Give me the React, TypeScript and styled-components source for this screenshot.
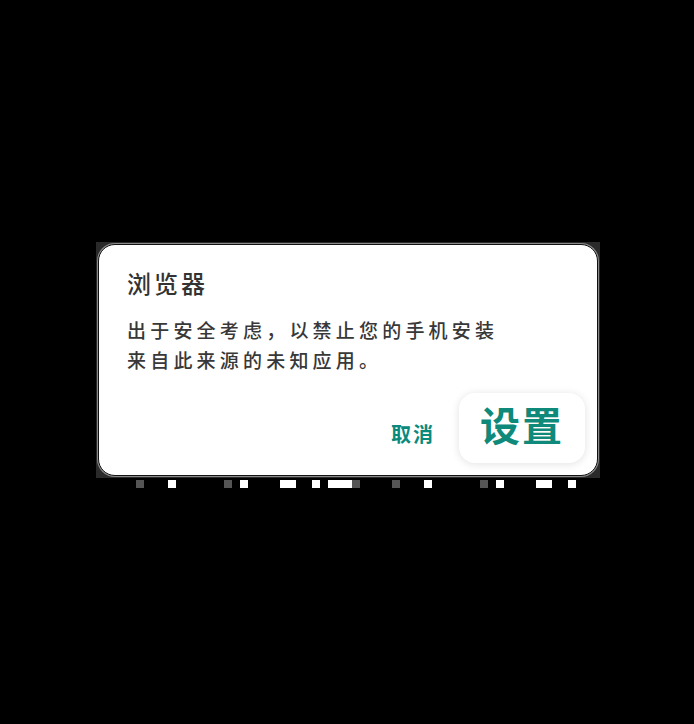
import React from "react";
import styled, { createGlobalStyle } from "styled-components";

const Global = createGlobalStyle`
  html, body { margin: 0; padding: 0; background: #000; }
  body { font-family: "Noto Sans CJK SC", "Noto Sans", sans-serif; }
`;

const Page = styled.div`
  width: 694px;
  height: 724px;
  background: #000;
  padding: 242px 0 0 96px;
  box-sizing: border-box;
`;

const Frame = styled.div`
  width: 504px;
  background: #2a2a2a;
  padding: 2px;
  box-sizing: border-box;
`;

const Card = styled.div`
  background: #fff;
  border-radius: 17px;
  border: 1px solid #111;
  box-shadow: 0 0 0 1px #8a8a8a;
  height: 232px;
  box-sizing: border-box;
  padding: 22px 12px 12px 28px;
  display: flex;
  flex-direction: column;
`;

const Title = styled.div`
  font-size: 24px;
  line-height: 32px;
  font-weight: 500;
  color: #333;
  letter-spacing: 3px;
`;

const Body = styled.div`
  margin-top: 16px;
  font-size: 19px;
  line-height: 30px;
  font-weight: 500;
  color: #383838;
  letter-spacing: 4.2px;
`;

const Actions = styled.div`
  margin-top: auto;
  display: flex;
  justify-content: flex-end;
  align-items: center;
  gap: 24px;
`;

const Cancel = styled.div`
  font-size: 20px;
  font-weight: 700;
  color: #0a8a7c;
  letter-spacing: 2px;
  margin-top: 10px;
`;

const Confirm = styled.div`
  width: 126px;
  height: 70px;
  border-radius: 16px;
  background: #fff;
  box-shadow: 0 1px 8px rgba(0, 0, 0, 0.12);
  display: flex;
  align-items: center;
  justify-content: center;
  font-size: 40px;
  font-weight: 700;
  color: #0f8a7a;
  letter-spacing: 2px;
  padding-bottom: 8px;
  box-sizing: border-box;
`;

const Marks = styled.div`
  position: relative;
  height: 8px;
  margin-top: 2px;
`;

const Mark = styled.span<{ $gray?: boolean }>`
  position: absolute;
  top: 0;
  height: 8px;
  background: ${(p) => (p.$gray ? "#555" : "#fff")};
`;

const marks: [number, number, boolean][] = [
  [136, 8, true], [168, 8, false], [224, 8, true], [240, 8, false],
  [280, 16, false], [312, 8, false], [328, 24, false], [352, 8, true],
  [392, 8, true], [424, 8, false], [480, 8, true], [496, 8, false],
  [536, 16, false], [568, 8, false],
];

export default function App() {
  return (
    <>
      <Global />
      <Page>
        <Frame>
          <Card>
            <Title>浏览器</Title>
            <Body>
              出于安全考虑，以禁止您的手机安装
              <br />
              来自此来源的未知应用。
            </Body>
            <Actions>
              <Cancel>取消</Cancel>
              <Confirm>设置</Confirm>
            </Actions>
          </Card>
        </Frame>
        <Marks>
          {marks.map(([x, w, g], i) => (
            <Mark key={i} $gray={g} style={{ left: x - 96, width: w }} />
          ))}
        </Marks>
      </Page>
    </>
  );
}
